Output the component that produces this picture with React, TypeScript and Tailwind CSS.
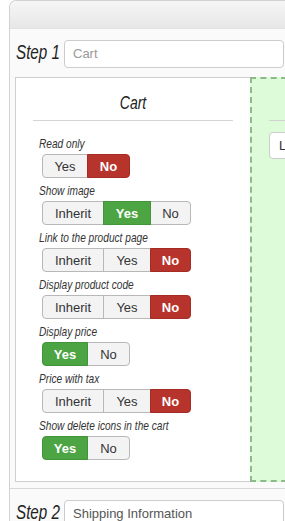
import React from "react";

type Opt = { label: string; w: string; on?: "yes" | "no" };

const settings: { label: string; opts: Opt[] }[] = [
  {
    label: "Read only",
    opts: [
      { label: "Yes", w: "w-[46px]" },
      { label: "No", w: "w-[43px]", on: "no" },
    ],
  },
  {
    label: "Show image",
    opts: [
      { label: "Inherit", w: "w-[62px]" },
      { label: "Yes", w: "w-[48px]", on: "yes" },
      { label: "No", w: "w-[41px]" },
    ],
  },
  {
    label: "Link to the product page",
    opts: [
      { label: "Inherit", w: "w-[62px]" },
      { label: "Yes", w: "w-[48px]" },
      { label: "No", w: "w-[41px]", on: "no" },
    ],
  },
  {
    label: "Display product code",
    opts: [
      { label: "Inherit", w: "w-[62px]" },
      { label: "Yes", w: "w-[48px]" },
      { label: "No", w: "w-[41px]", on: "no" },
    ],
  },
  {
    label: "Display price",
    opts: [
      { label: "Yes", w: "w-[46px]", on: "yes" },
      { label: "No", w: "w-[43px]" },
    ],
  },
  {
    label: "Price with tax",
    opts: [
      { label: "Inherit", w: "w-[62px]" },
      { label: "Yes", w: "w-[48px]" },
      { label: "No", w: "w-[41px]", on: "no" },
    ],
  },
  {
    label: "Show delete icons in the cart",
    opts: [
      { label: "Yes", w: "w-[46px]", on: "yes" },
      { label: "No", w: "w-[43px]" },
    ],
  },
];

function ButtonGroup({ opts }: { opts: Opt[] }) {
  return (
    <div className="flex ml-[3px] h-[24px]">
      {opts.map((o, i) => (
        <div
          key={o.label}
          className={[
            "flex items-center justify-center border text-[13px] leading-none",
            o.w,
            i > 0 ? "-ml-px" : "",
            i === 0 ? "rounded-l-[4px]" : "",
            i === opts.length - 1 ? "rounded-r-[4px]" : "",
            o.on === "yes"
              ? "bg-[#4da443] border-[#429339] text-white font-bold relative"
              : o.on === "no"
              ? "bg-[#b7342c] border-[#a42c25] text-white font-bold relative"
              : "bg-[#f3f3f3] border-[#b8b8b8] text-[#333]",
          ].join(" ")}
        >
          {o.label}
        </div>
      ))}
    </div>
  );
}

function StepRow({ n, value, placeholder }: { n: number; value?: string; placeholder?: string }) {
  return (
    <div className="flex items-center h-[28px]">
      <div className="w-[49px] pl-px">
        <span className="inline-block origin-left scale-x-[0.76] italic text-[20px] leading-none text-[#222] whitespace-nowrap">
          Step {n}
        </span>
      </div>
      <div className="w-[220px] h-[28px] bg-white border border-[#ccc] rounded-[4px] flex items-center px-[8px] text-[13px]">
        {value ? (
          <span className="text-[#555]">{value}</span>
        ) : (
          <span className="text-[#999]">{placeholder}</span>
        )}
      </div>
    </div>
  );
}

export default function App(): React.JSX.Element {
  return (
    <div className="w-[285px] h-[521px] overflow-hidden bg-white font-['Liberation_Sans',Arial,sans-serif]">
      <div className="ml-[9px] w-[330px] h-[540px] border-l border-t border-[#d2d2d2] rounded-tl-[7px] bg-[#fafafa]">
        <div className="h-[28px] rounded-tl-[7px] bg-gradient-to-b from-[#f6f6f6] to-[#e7e7e7] border-b border-[#e2e2e2]" />

        <section className="pl-[5px] pt-[11px] pb-[6px]">
          <StepRow n={1} placeholder="Cart" />

          <div className="flex mt-[9px] h-[405px]">
            <div className="w-[235px] bg-white border-l border-t border-b border-[#cfcfcf]">
              <div className="mx-[17px] h-[43px] pt-[14px] border-b border-[#d5d5d5] text-center">
                <span className="inline-block scale-x-[0.78] italic text-[18px] leading-[22px] text-[#222]">
                  Cart
                </span>
              </div>
              <div className="pl-[23px] mt-[10px]">
                {settings.map((s) => (
                  <div key={s.label}>
                    <div className="h-[23px] leading-[23px]">
                      <span className="inline-block origin-left scale-x-[0.78] italic text-[13px] text-[#333] whitespace-nowrap">
                        {s.label}
                      </span>
                    </div>
                    <ButtonGroup opts={s.opts} />
                  </div>
                ))}
              </div>
            </div>

            <div className="flex-1 bg-[#ddfad9] border-2 border-dashed border-[#8dba89]">
              <div className="ml-[17px] h-[42px] border-b border-[#d2d2d2]" />
              <div className="ml-[17px] mt-[11px] h-[27px] bg-white border border-[#ccc] rounded-[4px] flex items-center px-[9px] text-[13px] text-[#333]">
                Login
              </div>
            </div>
          </div>
        </section>

        <section className="border-t border-[#d8d8d8] pl-[5px] pt-[11px]">
          <StepRow n={2} value="Shipping Information" />
        </section>
      </div>
    </div>
  );
}
